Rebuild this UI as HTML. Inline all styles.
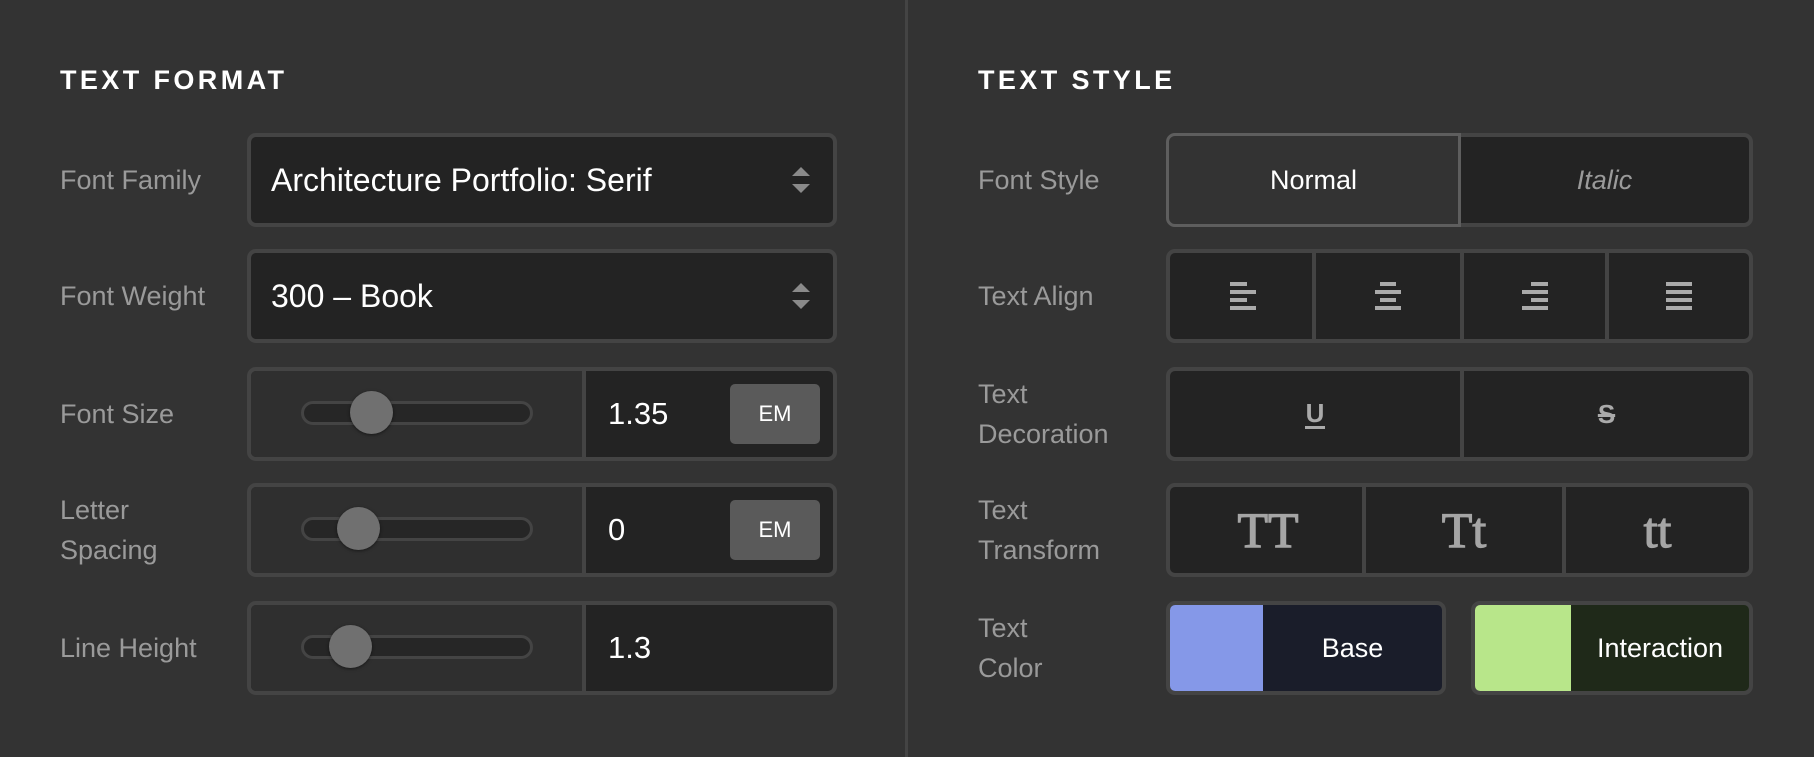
<!DOCTYPE html>
<html><head><meta charset="utf-8"><style>
*{box-sizing:border-box;margin:0;padding:0}
body{width:1814px;height:757px;background:#333;position:relative;overflow:hidden;font-family:"Liberation Sans",sans-serif}
.a{position:absolute}
.h{font-weight:bold;color:#fff;font-size:27px;letter-spacing:3.4px;top:65px}
.lb{color:#9a9a9a;font-size:27px;line-height:40px;left:60px}
.box{position:absolute;border:4px solid #444;border-radius:9px;background:#232323;overflow:hidden}
.sel{color:#fff;font-size:32px;line-height:86px;padding-left:20px}
.arr{position:absolute;right:22px;top:28px;width:20px;height:30px}
.sl{position:absolute;left:0;top:0;bottom:0;width:335px;background:#2f2f2f;border-right:4px solid #444}
.tr{position:absolute;left:50px;top:30px;width:232px;height:24px;border:3px solid #444;border-radius:12px;background:#262626}
.th{position:absolute;top:20px;width:43px;height:43px;border-radius:50%;background:#707070;box-shadow:0 1px 3px rgba(0,0,0,.5)}
.val{position:absolute;left:357px;top:0;line-height:86px;color:#fff;font-size:31px}
.em{position:absolute;left:479px;top:13px;width:90px;height:60px;background:#5a5a5a;border-radius:5px;color:#fff;font-size:22px;text-align:center;line-height:60px}
.seg{position:absolute;top:0;bottom:0;border-left:4px solid #444}
.c{display:flex;align-items:center;justify-content:center;position:absolute;top:0;bottom:0}
.al div{height:4px;background:#aaa;margin:4px 0}
.ser{font-family:"Liberation Serif",serif;color:#a5a5a5;font-size:50px;-webkit-text-stroke:1.2px #a5a5a5}
</style></head><body>
<div class="a" style="left:905px;top:0;width:3px;height:757px;background:#444"></div>

<div class="a h" style="left:60px">TEXT FORMAT</div>
<div class="a lb" style="top:160px">Font Family</div>
<div class="box" style="left:247px;top:133px;width:590px;height:94px"><div class="sel">Architecture Portfolio: Serif</div>
<svg class="arr" viewBox="0 0 20 30"><path d="M10 2 L19 11 H1Z M10 28 L19 19 H1Z" fill="#8a8a8a"/></svg></div>
<div class="a lb" style="top:276px">Font Weight</div>
<div class="box" style="left:247px;top:249px;width:590px;height:94px"><div class="sel">300 – Book</div>
<svg class="arr" viewBox="0 0 20 30"><path d="M10 2 L19 11 H1Z M10 28 L19 19 H1Z" fill="#8a8a8a"/></svg></div>

<div class="a lb" style="top:394px">Font Size</div>
<div class="box" style="left:247px;top:367px;width:590px;height:94px"><div class="sl"><div class="tr"></div><div class="th" style="left:99px"></div></div><div class="val">1.35</div><div class="em">EM</div></div>
<div class="a lb" style="top:490px">Letter<br>Spacing</div>
<div class="box" style="left:247px;top:483px;width:590px;height:94px"><div class="sl"><div class="tr"></div><div class="th" style="left:86px"></div></div><div class="val">0</div><div class="em">EM</div></div>
<div class="a lb" style="top:628px">Line Height</div>
<div class="box" style="left:247px;top:601px;width:590px;height:94px"><div class="sl"><div class="tr"></div><div class="th" style="left:78px"></div></div><div class="val">1.3</div></div>

<div class="a h" style="left:978px">TEXT STYLE</div>
<div class="a lb" style="left:978px;top:160px">Font Style</div>
<div class="box" style="left:1166px;top:133px;width:587px;height:94px">
<div class="c" style="left:290px;right:0;color:#9a9a9a;font-size:27px;font-style:italic">Italic</div></div>
<div class="a" style="left:1166px;top:133px;width:295px;height:94px;background:#333;border:3px solid #5e5e5e;border-radius:9px 0 0 9px;display:flex;align-items:center;justify-content:center;color:#fff;font-size:27px">Normal</div>

<div class="a lb" style="left:978px;top:276px">Text Align</div>
<div class="box" style="left:1166px;top:249px;width:587px;height:94px">
<div class="c" style="left:0;width:146px"><div class="al" style="width:26px"><div style="width:17px"></div><div></div><div style="width:17px"></div><div></div></div></div>
<div class="c seg" style="left:142px;width:148px"><div class="al" style="width:26px"><div style="width:16px;margin-left:5px"></div><div></div><div style="width:16px;margin-left:5px"></div><div></div></div></div>
<div class="c seg" style="left:290px;width:145px"><div class="al" style="width:26px"><div style="width:17px;margin-left:9px"></div><div></div><div style="width:17px;margin-left:9px"></div><div></div></div></div>
<div class="c seg" style="left:435px;right:0"><div class="al" style="width:26px"><div></div><div></div><div></div><div></div></div></div></div>

<div class="a lb" style="left:978px;top:374px">Text<br>Decoration</div>
<div class="box" style="left:1166px;top:367px;width:587px;height:94px">
<div class="c" style="left:0;width:290px;color:#aaa;font-size:26px;font-weight:bold"><span style="border-bottom:3px solid #aaa;line-height:26px;padding:0 1px">U</span></div>
<div class="c seg" style="left:290px;right:0;color:#aaa;font-size:26px;font-weight:bold"><span style="text-decoration:line-through;text-decoration-thickness:3px">S</span></div></div>

<div class="a lb" style="left:978px;top:490px">Text<br>Transform</div>
<div class="box" style="left:1166px;top:483px;width:587px;height:94px">
<div class="c ser" style="left:0;width:196px">TT</div>
<div class="c seg ser" style="left:192px;width:200px">Tt</div>
<div class="c seg ser" style="left:392px;right:0">tt</div></div>

<div class="a lb" style="left:978px;top:608px">Text<br>Color</div>
<div class="box" style="left:1166px;top:601px;width:280px;height:94px;background:#1a1d2a">
<div class="a" style="left:0;top:0;bottom:0;width:93px;background:#8598e8"></div>
<div class="c" style="left:93px;right:0;color:#fff;font-size:27px">Base</div></div>
<div class="box" style="left:1471px;top:601px;width:282px;height:94px;background:#1f2919">
<div class="a" style="left:0;top:0;bottom:0;width:96px;background:#b8e68a"></div>
<div class="c" style="left:96px;right:0;color:#fff;font-size:27px">Interaction</div></div>
</body></html>
